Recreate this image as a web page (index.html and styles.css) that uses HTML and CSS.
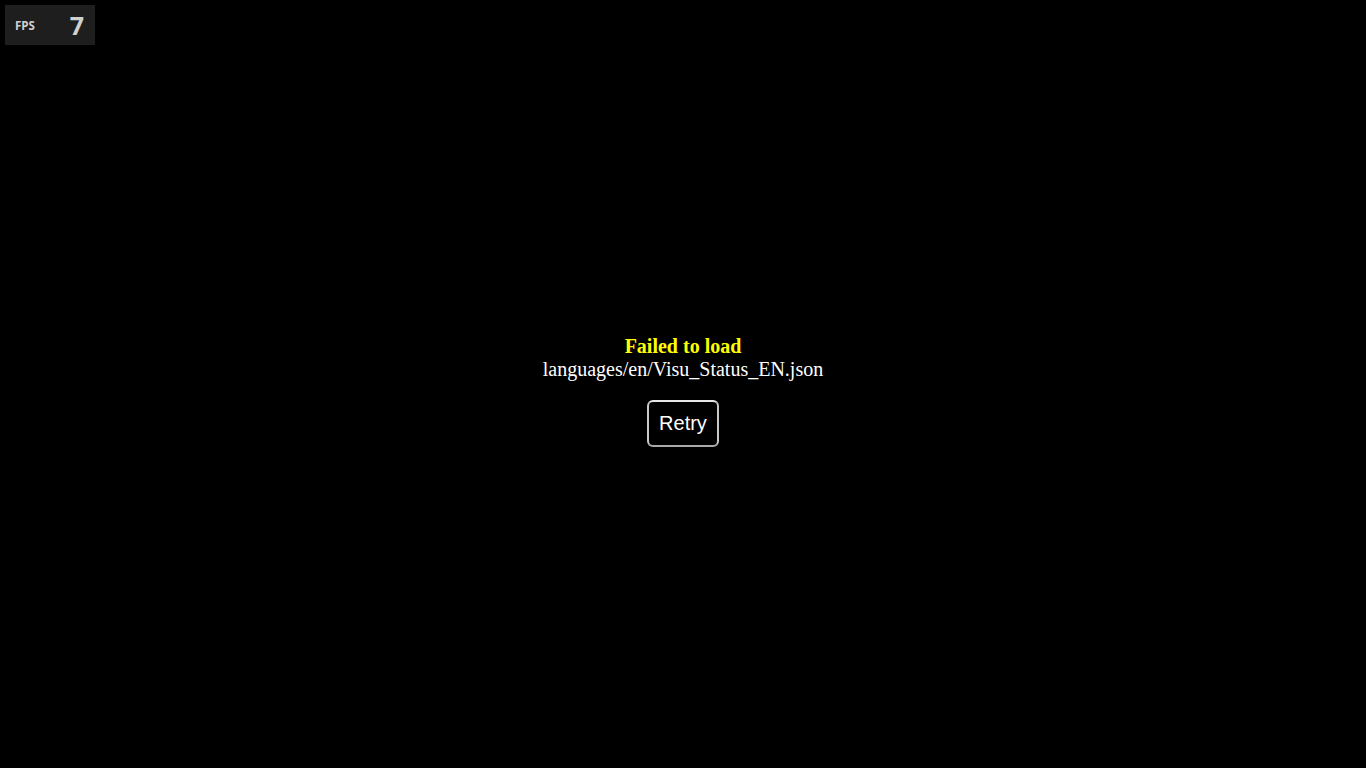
FILE: index.html
```html
<!DOCTYPE html>
<html>
<head>
<meta charset="utf-8">
<link rel="stylesheet" href="styles.css">
</head>
<body>
<div class="fps">
  <span class="fps-label">FPS</span>
  <span class="fps-value">7</span>
</div>
<main class="screen">
  <div class="message">
    <div class="title">Failed to load</div>
    <div class="path">languages/en/Visu_Status_EN.json</div>
    <button class="retry">Retry</button>
  </div>
</main>
</body>
</html>
```
FILE: styles.css
```css
html, body {
  margin: 0;
  padding: 0;
  background: #000;
  height: 100%;
}
body {
  position: relative;
  overflow: hidden;
}
.fps {
  position: absolute;
  left: 5px;
  top: 5px;
  width: 90px;
  height: 40px;
  background: #1e1e1e;
  display: flex;
  align-items: center;
  justify-content: space-between;
  box-sizing: border-box;
  padding: 0 11px 0 10px;
  font-family: "Open Sans", "Liberation Sans", sans-serif;
  color: #d0d0d0;
  font-weight: 700;
}
.fps-label {
  font-size: 11.5px;
  font-weight: 700;
  letter-spacing: 0;
  margin-top: 1px;
}
.fps-value {
  font-size: 25px;
  line-height: 1;
}
.screen {
  height: 768px;
  display: flex;
  align-items: center;
  justify-content: center;
  box-sizing: border-box;
  padding-top: 14px;
}
.message {
  display: flex;
  flex-direction: column;
  align-items: center;
  font-family: "Liberation Serif", "Times New Roman", serif;
  font-size: 20px;
  line-height: 23px;
  color: #fff;
}
.title {
  color: #ffff00;
  font-weight: 700;
}
.retry {
  margin-top: 19px;
  width: 72px;
  height: 47px;
  background: #000;
  color: #fff;
  border: 2px solid #c8c8c8;
  border-top-color: #e6e6e6;
  border-bottom-color: #a8a8a8;
  border-radius: 6px;
  font-family: "Liberation Sans", Arial, sans-serif;
  font-size: 20px;
  padding: 0;
}
```
